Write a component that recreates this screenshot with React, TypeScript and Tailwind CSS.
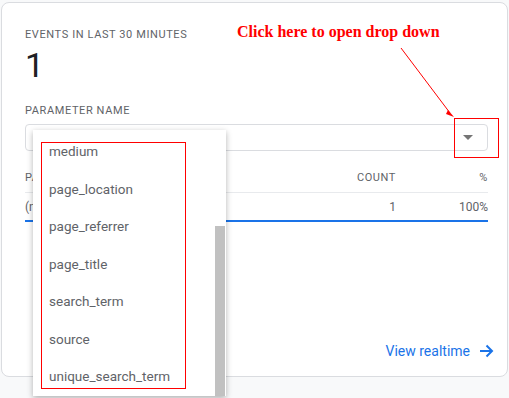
import React from "react";

const options = [
  "medium",
  "page_location",
  "page_referrer",
  "page_title",
  "search_term",
  "source",
  "unique_search_term",
];

export default function App() {
  return (
    <div className="relative w-[509px] h-[398px] overflow-hidden bg-[#f8f9fa] font-['Roboto',sans-serif]">
      <div className="ml-px mt-[2px] w-[507px] h-[375px] bg-white border border-[#dadce0] rounded-lg flex flex-col pl-[23px] pr-[19px]">
        <div className="pt-[24px] text-[11px] leading-4 tracking-[0.6px] text-[#5f6368] uppercase">
          Events in last 30 minutes
        </div>
        <div className="mt-[4px] text-[34px] leading-[36px] text-[#202124]">1</div>
        <div className="mt-[20px] text-[11px] leading-4 tracking-[0.6px] text-[#5f6368] uppercase">
          Parameter name
        </div>
        <div className="mt-[5px] h-[27px] border border-[#dadce0] rounded flex items-center justify-end pr-[14px]">
          <div className="w-0 h-0 border-l-[5px] border-r-[5px] border-t-[5px] border-l-transparent border-r-transparent border-t-[#757575]" />
        </div>

        <div className="mt-[19px] flex items-center text-[11px] leading-4 tracking-[0.6px] text-[#5f6368] uppercase border-b border-[#e8eaed] pb-[6px]">
          <span className="flex-1">Parameter</span>
          <span className="w-[60px] text-right">Count</span>
          <span className="w-[92px] text-right">%</span>
        </div>
        <div className="flex items-center text-[12px] leading-4 text-[#5f6368] pt-[6px] pb-[5px] border-b-2 border-[#1a73e8]">
          <span className="flex-1">(not set)</span>
          <span className="w-[60px] text-right">1</span>
          <span className="w-[92px] text-right">100%</span>
        </div>

        <div className="flex-1" />
        <div className="flex justify-end items-center gap-[9px] pb-[15px] mr-[-6px] text-[14px] leading-5 text-[#1a73e8]">
          <span>View realtime</span>
          <svg width="15" height="14" viewBox="0 0 15 14" fill="none" stroke="#1a73e8" strokeWidth="2">
            <path d="M1 7h12M7.5 1.5 13 7l-5.5 5.5" />
          </svg>
        </div>
      </div>

      {/* annotation */}
      <div className="absolute left-[237px] top-[20px] text-[16px] font-bold text-[#ff0000] font-['Liberation_Serif',serif]">
        Click here to open drop down
      </div>
      <svg className="absolute left-0 top-0" width="509" height="398">
        <line x1="401" y1="48" x2="450" y2="113" stroke="#ff0000" strokeWidth="1" />
        <path d="M448 110 L454 117 L446 114 Z" fill="#ff0000" />
      </svg>
      <div className="absolute left-[454px] top-[118px] w-[45px] h-[40px] border border-[#ff0000]" />

      {/* open dropdown menu */}
      <div className="absolute left-[33px] top-[130px] w-[193px] h-[266px] bg-white shadow-[0_2px_6px_rgba(0,0,0,0.3)] flex">
        <div className="flex-1 pl-[8px] pt-[12px]">
          <div className="w-[145px] h-[247px] border border-[#ff0000] flex flex-col">
            {options.map((o, i) => (
              <div key={o} className={`pl-[7px] text-[13.5px] leading-5 text-[#5f6368] ${i === 0 ? "mt-[-2px]" : "mt-[17.5px]"}`}>
                {o}
              </div>
            ))}
          </div>
        </div>
        <div className="w-[10px] mr-px flex flex-col">
          <div className="h-[96px]" />
          <div className="flex-1 bg-[#c1c1c1]" />
        </div>
      </div>
    </div>
  );
}
